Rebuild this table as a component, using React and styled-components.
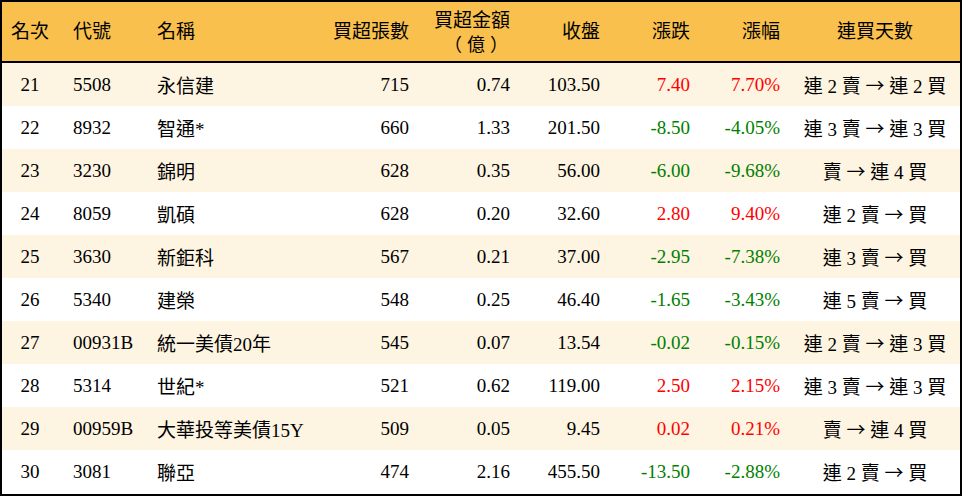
import React from 'react';
import styled, { createGlobalStyle } from 'styled-components';

const GlobalStyle = createGlobalStyle`
  html, body {
    margin: 0;
    padding: 0;
    background: #ffffff;
  }
  body {
    font-family: "Liberation Serif", "Noto Sans CJK TC", serif;
    color: #000000;
  }
`

const COLS = '56px 84px 188px 89px 101px 90px 90px 90px 1fr';

const Frame = styled.div `
  width: 962px;
  height: 496px;
  box-sizing: border-box;
  border: 2px solid #000000;
  background: #ffffff;
  font-size: 19px;
`

const HeaderRow = styled.div `
  display: grid;
  grid-template-columns: ${COLS};
  height: 59px;
  background: #f9c04d;
  border-bottom: 2px solid #000000;
`

const Row = styled.div `
  display: grid;
  grid-template-columns: ${COLS};
  height: 43px;
  background: ${props => props.$striped ? '#fdf4e1' : '#ffffff'};
`

const padFor = align => {
  if (align === 'left') return 'padding-left: 15px;';
  if (align === 'right') return 'padding-right: 10px;';
  return '';
}

const HeadCell = styled.div `
  display: flex;
  flex-direction: column;
  justify-content: center;
  align-items: ${props => props.$align === 'left' ? 'flex-start' : props.$align === 'right' ? 'flex-end' : 'center'};
  text-align: ${props => props.$align};
  line-height: 22px;
  ${props => padFor(props.$align)}
  white-space: nowrap;
`

const Label = styled.span `
  display: block;
  height: 22px;
`

const Unit = styled.span `
  display: block;
  height: 22px;
  font-family: "Noto Sans CJK TC", sans-serif;
  font-size: 18px;
  line-height: 22px;
  letter-spacing: 5px;
  margin-right: -3px;
`

const Cell = styled.div `
  display: flex;
  align-items: center;
  justify-content: ${props => props.$align === 'left' ? 'flex-start' : props.$align === 'right' ? 'flex-end' : 'center'};
  ${props => padFor(props.$align)}
  white-space: pre;
  color: ${props => props.$tone === 'up' ? '#ff0000' : props.$tone === 'down' ? '#008000' : '#000000'};
`

const Arrow = styled.span `
  font-family: "Noto Sans CJK TC", sans-serif;
`

const columns = [
  { label: '名次', align: 'center' },
  { label: '代號', align: 'left' },
  { label: '名稱', align: 'left' },
  { label: '買超張數', align: 'right' },
  { label: '買超金額', unit: '（億）', align: 'right' },
  { label: '收盤', align: 'right' },
  { label: '漲跌', align: 'right' },
  { label: '漲幅', align: 'right' },
  { label: '連買天數', align: 'center' },
]

const rows = [
  ['21', '5508', '永信建', '715', '0.74', '103.50', '7.40', '7.70%', '連 2 賣 → 連 2 買'],
  ['22', '8932', '智通*', '660', '1.33', '201.50', '-8.50', '-4.05%', '連 3 賣 → 連 3 買'],
  ['23', '3230', '錦明', '628', '0.35', '56.00', '-6.00', '-9.68%', '賣 → 連 4 買'],
  ['24', '8059', '凱碩', '628', '0.20', '32.60', '2.80', '9.40%', '連 2 賣 → 買'],
  ['25', '3630', '新鉅科', '567', '0.21', '37.00', '-2.95', '-7.38%', '連 3 賣 → 買'],
  ['26', '5340', '建榮', '548', '0.25', '46.40', '-1.65', '-3.43%', '連 5 賣 → 買'],
  ['27', '00931B', '統一美債20年', '545', '0.07', '13.54', '-0.02', '-0.15%', '連 2 賣 → 連 3 買'],
  ['28', '5314', '世紀*', '521', '0.62', '119.00', '2.50', '2.15%', '連 3 賣 → 連 3 買'],
  ['29', '00959B', '大華投等美債15Y', '509', '0.05', '9.45', '0.02', '0.21%', '賣 → 連 4 買'],
  ['30', '3081', '聯亞', '474', '2.16', '455.50', '-13.50', '-2.88%', '連 2 賣 → 買'],
]

const toneOf = (value, index) => {
  if (index !== 6 && index !== 7) return null;
  return value.startsWith('-') ? 'down' : 'up';
}

const renderValue = value => {
  if (!value.includes('→')) return value;
  const [before, after] = value.split('→');
  return <>{before}<Arrow>→</Arrow>{after}</>;
}

function App() {
  return (
    <>
      <GlobalStyle />
      <Frame>
        <HeaderRow>
          {columns.map((col, i) => (
            <HeadCell key={i} $align={col.align}>
              <Label>{col.label}</Label>
              {col.unit && <Unit>{col.unit}</Unit>}
            </HeadCell>
          ))}
        </HeaderRow>
        {rows.map((row, r) => (
          <Row key={row[0]} $striped={r % 2 === 0}>
            {row.map((value, i) => (
              <Cell key={i} $align={columns[i].align} $tone={toneOf(value, i)}>
                {renderValue(value)}
              </Cell>
            ))}
          </Row>
        ))}
      </Frame>
    </>
  )
}

export default App
